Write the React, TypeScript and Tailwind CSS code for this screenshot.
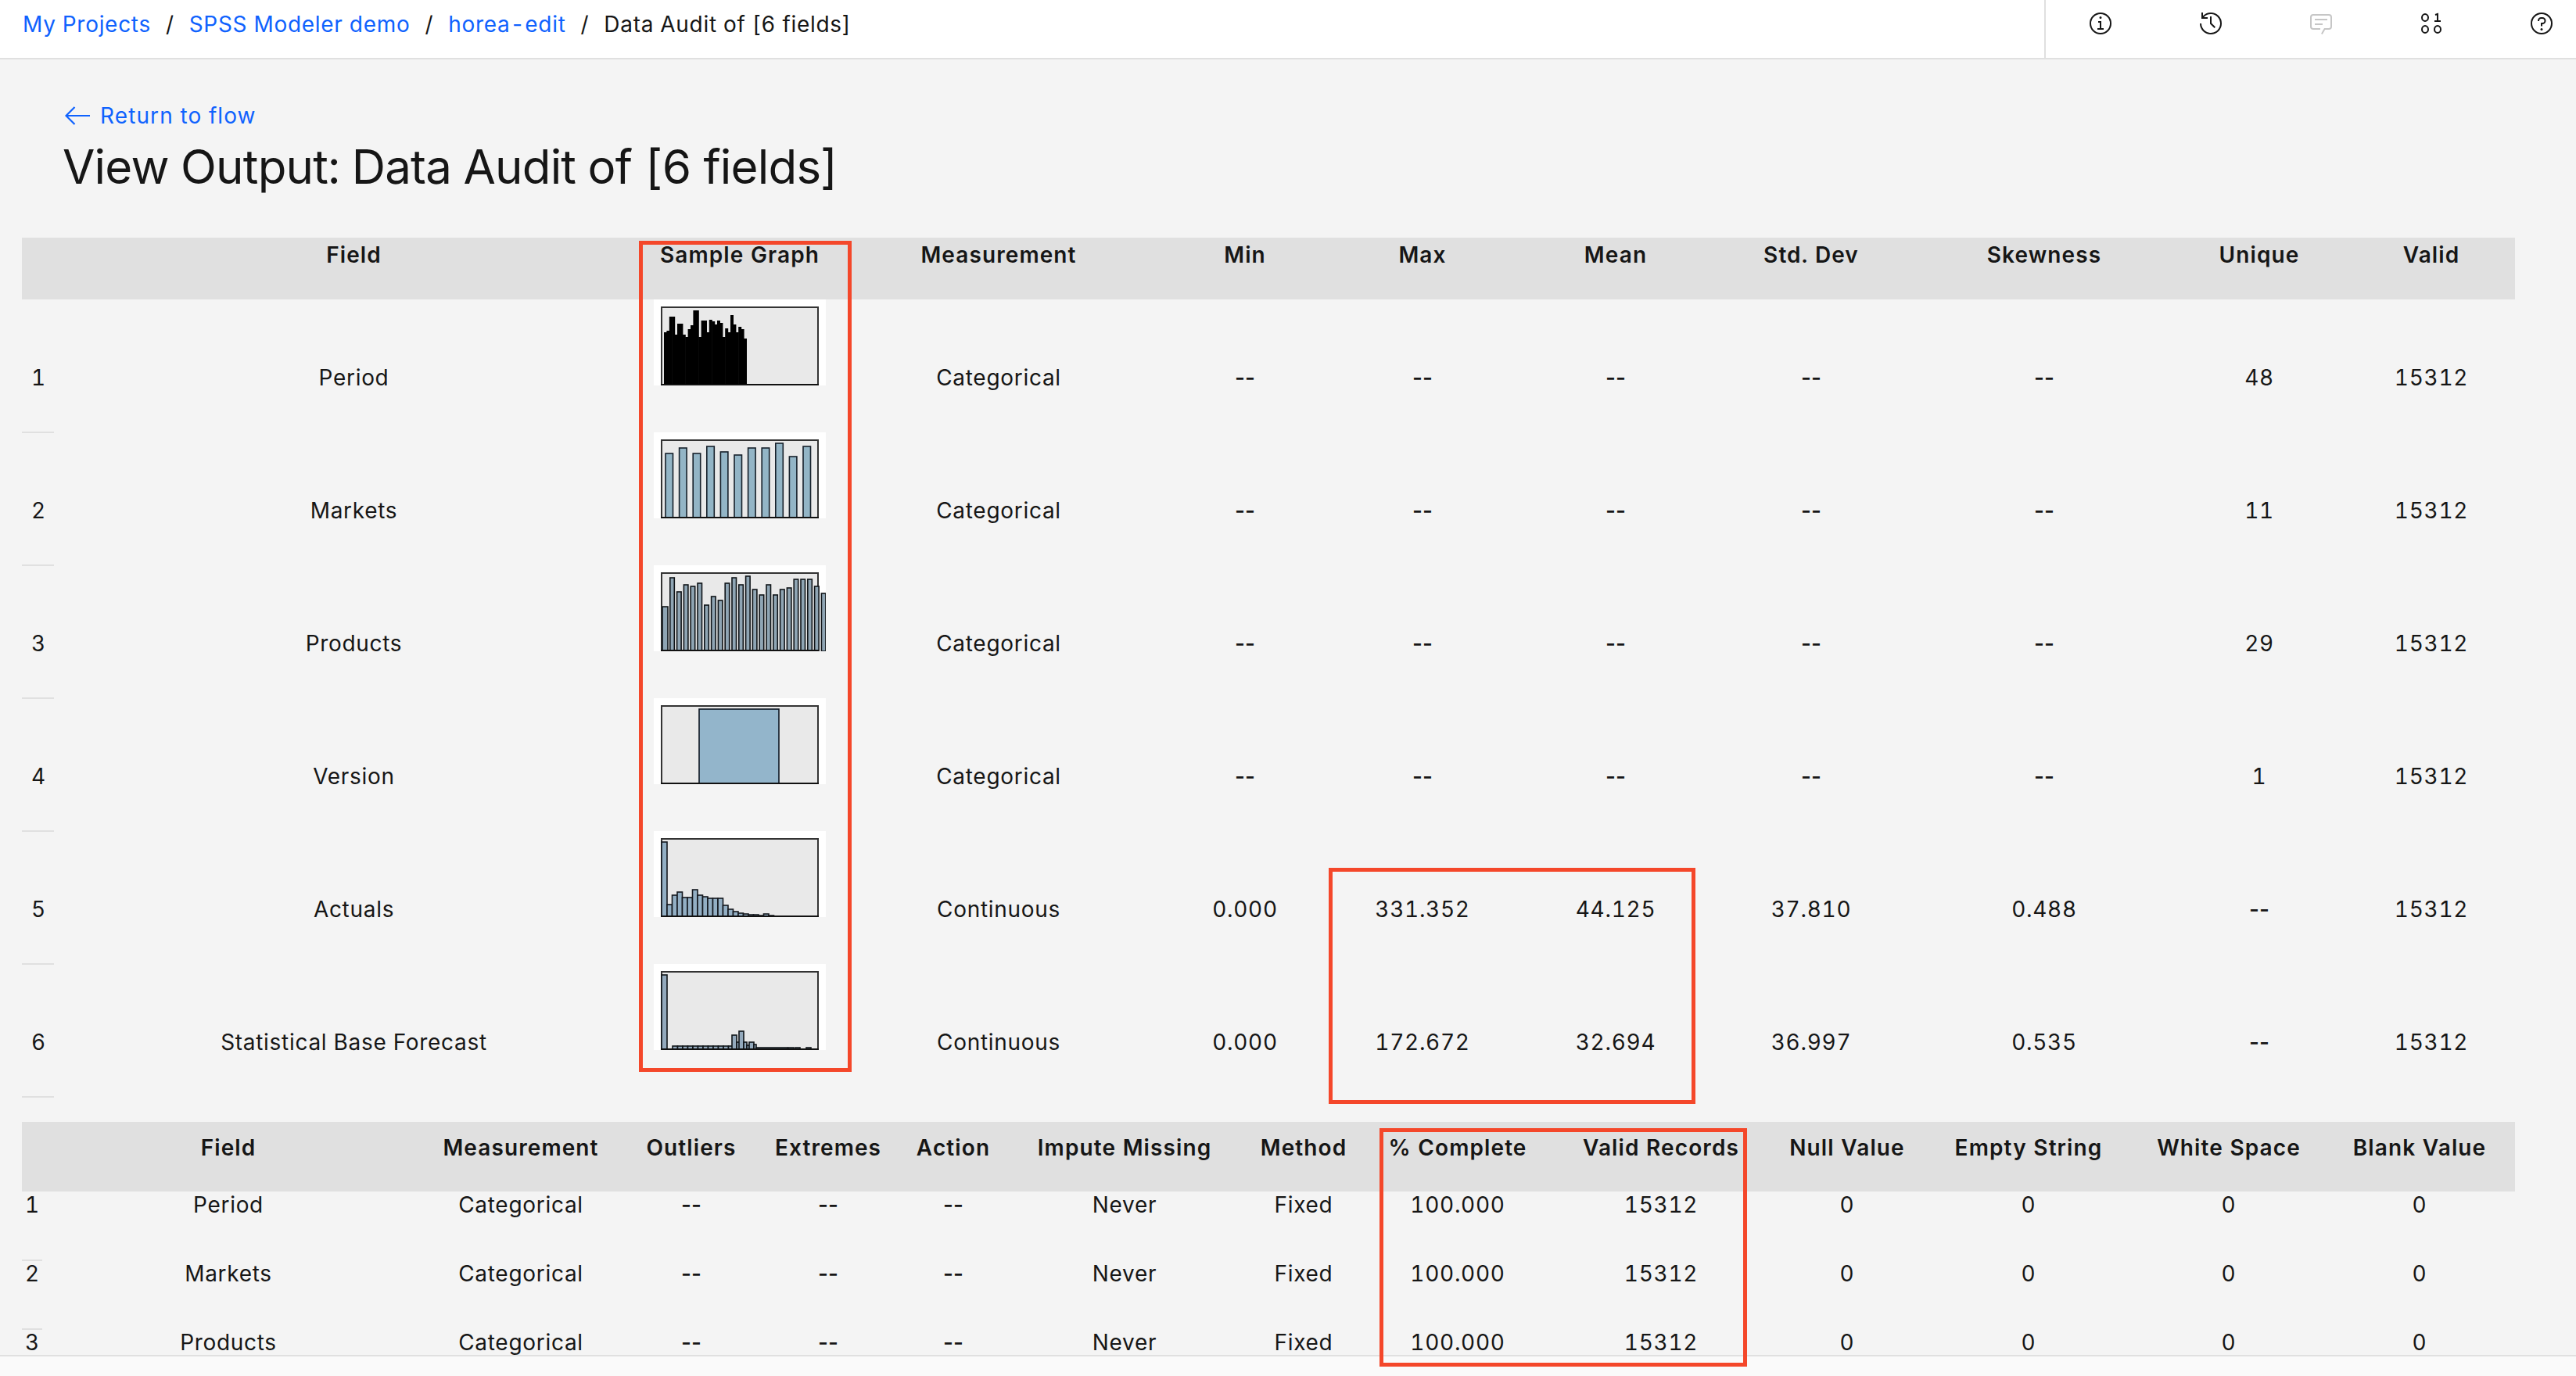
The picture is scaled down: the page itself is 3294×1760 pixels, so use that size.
const col1 = "grid grid-cols-[41px_767px_220px_442px_188px_266px_228px_272px_324px_226px_214px]";
const col2 = "grid grid-cols-[26px_476px_272px_164px_186px_134px_304px_154px_240px_280px_196px_268px_244px_244px]";

const head1 = ["", "Field", "Sample Graph", "Measurement", "Min", "Max", "Mean", "Std. Dev", "Skewness", "Unique", "Valid"];
const rows1 = [
  ["1", "Period", "Categorical", "--", "--", "--", "--", "--", "48", "15312"],
  ["2", "Markets", "Categorical", "--", "--", "--", "--", "--", "11", "15312"],
  ["3", "Products", "Categorical", "--", "--", "--", "--", "--", "29", "15312"],
  ["4", "Version", "Categorical", "--", "--", "--", "--", "--", "1", "15312"],
  ["5", "Actuals", "Continuous", "0.000", "331.352", "44.125", "37.810", "0.488", "--", "15312"],
  ["6", "Statistical Base Forecast", "Continuous", "0.000", "172.672", "32.694", "36.997", "0.535", "--", "15312"],
];

const head2 = ["", "Field", "Measurement", "Outliers", "Extremes", "Action", "Impute Missing", "Method", "% Complete", "Valid Records", "Null Value", "Empty String", "White Space", "Blank Value"];
const rows2 = ["Period", "Markets", "Products"].map((f, i) => [
  String(i + 1), f, "Categorical", "--", "--", "--", "Never", "Fixed", "100.000", "15312", "0", "0", "0", "0",
]);

// bars are [x, width, top], all sit on the frame's bottom edge
type Bar = [number, number, number];

const periodTops = [42, 40, 22, 22, 45, 31, 31, 45, 48, 38, 33, 14, 14, 48, 27, 27, 42, 26, 28, 32, 27, 30, 48, 37, 42, 20, 32, 42, 35, 38, 50];
const marketTops = [27, 20, 27, 18, 25, 29, 20, 20, 14, 31, 18];
const productTops = [53, 16, 34, 25, 27, 23, 51, 40, 45, 23, 16, 25, 14, 31, 38, 25, 38, 31, 29, 18, 18, 18, 27, 36];
const actualTops = [94, 82, 78, 85, 85, 75, 82, 84, 86, 86, 86, 95, 100, 103, 105, 106, 107, 107, 108, 106, 108];

const graphs: { fill: string; stroke: string; bars: Bar[] }[] = [
  { fill: "#000000", stroke: "#000000", bars: periodTops.map((t, i) => [13 + i * 3.4, 4, t] as Bar) },
  { fill: "#93b5c6", stroke: "#16202a", bars: marketTops.map((t, i) => [15 + i * 17.6, 9.5, t] as Bar) },
  { fill: "#8fa5b4", stroke: "#101418", bars: productTops.map((t, i) => [(i === 0 ? 11 : 12 + i * 8.8), i === 0 ? 7 : 5.5, t] as Bar) },
  { fill: "#93b5cb", stroke: "#101824", bars: [[58, 102, 14]] },
  {
    fill: "#93afc4",
    stroke: "#14181e",
    bars: [[10, 7, 14] as Bar, ...actualTops.map((t, i) => [17 + i * 6.5, 6.5, t] as Bar)],
  },
  {
    fill: "#93a9bc",
    stroke: "#101418",
    bars: [
      [10, 7, 14],
      ...Array.from({ length: 12 }, (_, i) => [24 + i * 6.5, 6.5, 105] as Bar),
      [100, 6, 91],
      [106, 4, 100],
      [109, 6, 86],
      [115, 4, 100],
      [119, 3, 104],
      [122, 6, 100],
      [128, 3, 103],
      [131, 40, 107],
      [172, 7, 107],
      [181, 6, 107],
      [195, 6, 107],
    ],
  },
];

function Graph({ index }: { index: number }) {
  const g = graphs[index];
  return (
    <svg width="220" height="110" viewBox="0 0 220 110" className="block">
      <rect width="220" height="110" fill="#ffffff" />
      <rect x="10" y="10" width="200" height="99" fill="#e9e9e9" stroke="#333333" strokeWidth="2" />
      {g.bars.map(([x, w, t], i) => (
        <rect key={i} x={x} y={t} width={w} height={110 - t} fill={g.fill} stroke={g.stroke} strokeWidth={index === 0 ? 0 : 1.6} />
      ))}
      <rect x="9" y="108" width="202" height="2" fill="#111111" />
    </svg>
  );
}

function InfoIcon() {
  return (
    <svg width="32" height="32" viewBox="0 0 32 32" fill="#161616">
      <path d="M17 22v-9h-4v2h2v7h-3v2h8v-2zM16 7a1.5 1.5 0 1 0 0 3 1.5 1.5 0 0 0 0-3z" />
      <path d="M16 30a14 14 0 1 1 0-28 14 14 0 0 1 0 28zm0-26a12 12 0 1 0 0 24 12 12 0 0 0 0-24z" />
    </svg>
  );
}

function HistoryIcon() {
  return (
    <svg width="32" height="32" viewBox="0 0 32 32" fill="#161616">
      <path d="M20.59 22L15 16.41V7h2v8.58l5 5.01L20.59 22z" />
      <path d="M16 2A13.94 13.94 0 0 0 6 6.23V2H4v8h8V8H7.08A12 12 0 1 1 4 16H2A14 14 0 1 0 16 2z" />
    </svg>
  );
}

function ChatIcon() {
  return (
    <svg width="32" height="32" viewBox="0 0 32 32" fill="#c6c6c6">
      <path d="M17.74 30L16 29l4-7h6a2 2 0 0 0 2-2V8a2 2 0 0 0-2-2H6a2 2 0 0 0-2 2v12a2 2 0 0 0 2 2h9v2H6a4 4 0 0 1-4-4V8a4 4 0 0 1 4-4h20a4 4 0 0 1 4 4v12a4 4 0 0 1-4 4h-4.84z" />
      <path d="M8 10h16v2H8zM8 16h10v2H8z" />
    </svg>
  );
}

function BinaryIcon() {
  return (
    <svg width="32" height="32" viewBox="0 0 32 32" fill="none" stroke="#161616" strokeWidth="2">
      <ellipse cx="8" cy="8.5" rx="4" ry="4.5" />
      <ellipse cx="8" cy="23.5" rx="4" ry="4.5" />
      <ellipse cx="24" cy="23.5" rx="4" ry="4.5" />
      <path d="M21 5l3-1v9M20 13h8" />
    </svg>
  );
}

function HelpIcon() {
  return (
    <svg width="32" height="32" viewBox="0 0 32 32" fill="#161616">
      <path d="M16 2a14 14 0 1 0 0 28 14 14 0 0 0 0-28zm0 26a12 12 0 1 1 0-24 12 12 0 0 1 0 24z" />
      <circle cx="16" cy="23.5" r="1.5" />
      <path d="M17 8h-1.5a4.49 4.49 0 0 0-4.5 4.5v.5h2v-.5a2.5 2.5 0 0 1 2.5-2.5H17a2.5 2.5 0 0 1 0 5h-2v4.5h2V17a4.5 4.5 0 0 0 0-9z" />
    </svg>
  );
}

function Value({ text }: { text: string }) {
  if (text === "--") return <span className="normal-nums tracking-normal font-medium">--</span>;
  return <>{text}</>;
}

export default function App() {
  return (
    <div className="relative w-[3294px] h-[1760px] overflow-hidden bg-[#fafafa] text-[#161616] text-[28px] tracking-[0.7px] tabular-nums font-['Inter',sans-serif] flex flex-col">
      <header className="h-[76px] shrink-0 bg-white border-b-2 border-[#e0e0e0] flex justify-between">
        <nav className="flex items-center gap-[19px] pl-[29px] h-[62px] leading-[40px]">
          <a className="text-[#0f62fe]">My Projects</a>
          <span>/</span>
          <a className="text-[#0f62fe]">SPSS Modeler demo</a>
          <span>/</span>
          <a className="text-[#0f62fe]">horea-edit</a>
          <span>/</span>
          <span>Data Audit of [6 fields]</span>
        </nav>
        <div className="w-[680px] border-l-2 border-[#e0e0e0] flex items-start pt-[14px] pl-[54px] gap-[109px]">
          <InfoIcon />
          <HistoryIcon />
          <ChatIcon />
          <BinaryIcon />
          <HelpIcon />
        </div>
      </header>

      <main className="flex-1 min-h-0 overflow-hidden bg-[#f4f4f4] border-b-2 border-[#e0e0e0]">
        <div className="pl-[83px] pt-[52px]">
          <a className="flex items-center gap-[13px] text-[#0f62fe] leading-[40px] tracking-[1.1px]">
            <svg width="32" height="32" viewBox="0 0 32 32" fill="none" stroke="#0f62fe" strokeWidth="2.2">
              <path d="M1.5 16H32M12.5 5L1.5 16l11 11" />
            </svg>
            Return to flow
          </a>
          <h1 className="-ml-[3px] mt-[9px] text-[60px] leading-[72px] font-normal tracking-[-0.8px]">View Output: Data Audit of [6 fields]</h1>
        </div>

        <div className="ml-[28px] w-[3188px] mt-[55px]">
          <div className={`${col1} h-[79px] bg-[#e0e0e0] font-semibold text-center leading-[40px] pt-[2px] tracking-[1.1px]`}>
            {head1.map((h, i) => (
              <div key={i}>{h}</div>
            ))}
          </div>
          {rows1.map((r, i) => (
            <div key={r[0]} className={`${col1} h-[170px] text-center leading-[40px]`}>
              <div className="h-[171px] text-left pl-[12px] pt-[80px] border-b-2 border-[#e0e0e0]">{r[0]}</div>
              <div className="pt-[80px]">{r[1]}</div>
              <div>
                <Graph index={i} />
              </div>
              {r.slice(2).map((c, j) => (
                <div key={j} className="pt-[80px]">
                  <Value text={c} />
                </div>
              ))}
            </div>
          ))}

          <div className={`${col2} mt-[32px] h-[89px] bg-[#e0e0e0] font-semibold text-center leading-[40px] pt-[13px] tracking-[1.1px]`}>
            {head2.map((h, i) => (
              <div key={i}>{h}</div>
            ))}
          </div>
          {rows2.map((r) => (
            <div key={r[0]} className={`${col2} h-[88px] text-center leading-[34px]`}>
              {r.map((c, j) =>
                j === 0 ? (
                  <div key={j} className="h-[89px] text-left pl-[4px] border-b-2 border-[#e0e0e0]">
                    {c}
                  </div>
                ) : (
                  <div key={j}>
                    <Value text={c} />
                  </div>
                )
              )}
            </div>
          ))}
        </div>
      </main>
      <div className="h-[25px] shrink-0" />

      {/* red call-out boxes drawn over the tables */}
      <div className="absolute left-[817px] top-[308px] w-[272px] h-[1063px] border-[5px] border-[#f4472a] pointer-events-none" />
      <div className="absolute left-[1699px] top-[1110px] w-[469px] h-[302px] border-[5px] border-[#f4472a] pointer-events-none" />
      <div className="absolute left-[1764px] top-[1443px] w-[470px] h-[305px] border-[5px] border-[#f4472a] pointer-events-none" />
    </div>
  );
}
